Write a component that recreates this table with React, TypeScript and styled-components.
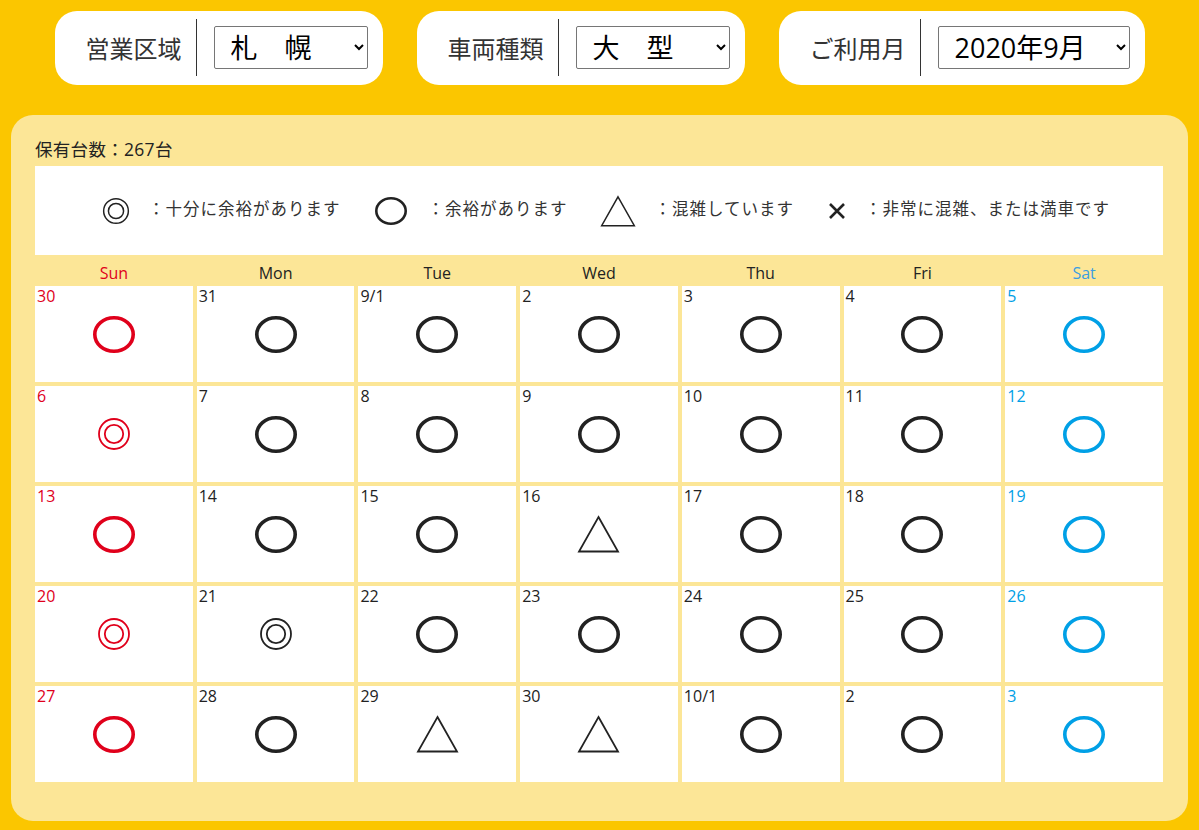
import React from "react";
import styled, { createGlobalStyle } from "styled-components";

const GlobalStyle = createGlobalStyle`
  body {
    margin: 0;
    background: #fbc600;
    font-family: "Open Sans", "Noto Sans CJK JP", sans-serif;
    color: #222;
  }
`;

const RED = "#e0001b";
const BLUE = "#00a0e6";
const DARK = "#222";

const Page = styled.div`
  width: 1199px;
  height: 830px;
  overflow: hidden;
`;

const Header = styled.div`
  display: flex;
  justify-content: center;
  gap: 34px;
  padding-top: 11px;
`;

const FilterBox = styled.div`
  display: flex;
  align-items: center;
  height: 74px;
  box-sizing: border-box;
  padding: 8px 15px 9px 31px;
  background: #fff;
  border-radius: 22px;
`;

const FilterLabel = styled.span`
  font-family: "Noto Sans CJK JP", sans-serif;
  font-size: 24px;
  color: #333;
  white-space: nowrap;
`;

const Divider = styled.div`
  align-self: stretch;
  width: 1px;
  background: #333;
  margin: 0 17px 0 14px;
`;

const Select = styled.select<{ $w: number }>`
  width: ${(p) => p.$w}px;
  height: 43px;
  font-family: "Open Sans", "Noto Sans CJK JP", sans-serif;
  font-size: 27px;
  color: #000;
  background: #fff;
  border: 1px solid #767676;
  border-radius: 2px;
  padding: 0 8px 0 12px;
`;

const Panel = styled.div`
  margin: 30px 11px 0;
  padding: 22px 25px 39px 24px;
  background: #fce697;
  border-radius: 22px;
`;

const Holdings = styled.div`
  font-family: "Open Sans", "Noto Sans CJK JP", sans-serif;
  font-size: 17.5px;
  line-height: 24px;
  letter-spacing: 0.3px;
  margin-bottom: 5px;
`;

const Legend = styled.div`
  display: flex;
  justify-content: center;
  align-items: center;
  gap: 33px;
  height: 89px;
  padding-left: 14px;
  background: #fff;
`;

const LegendItem = styled.div`
  display: flex;
  align-items: center;
  gap: 18px;
`;

const LegendText = styled.span`
  font-family: "Noto Sans CJK JP", sans-serif;
  font-size: 16.5px;
  letter-spacing: 1px;
  color: #333;
  margin-top: -6px;
`;

const Grid = styled.div`
  display: grid;
  grid-template-columns: repeat(7, 1fr);
  column-gap: 4px;
  row-gap: 4px;
`;

const DayName = styled.div<{ $c: string }>`
  height: 27px;
  display: flex;
  align-items: flex-end;
  justify-content: center;
  font-size: 16px;
  line-height: 18px;
  color: ${(p) => p.$c};
`;

const Cell = styled.div`
  height: 96px;
  background: #fff;
  display: grid;
  grid-template-areas: "stack";
`;

const DayNum = styled.span<{ $c: string }>`
  grid-area: stack;
  align-self: start;
  justify-self: start;
  padding: 0 0 0 2px;
  font-size: 16px;
  line-height: 20px;
  color: ${(p) => p.$c};
`;

const Mark = styled.div`
  grid-area: stack;
  align-self: center;
  justify-self: center;
  display: flex;
`;

type Kind = "double" | "circle" | "tri" | "cross";

const Symbol = ({ kind, color, big }: { kind: Kind; color: string; big?: boolean }) => {
  if (kind === "circle") {
    const w = big ? 46 : 36;
    const h = big ? 41 : 32;
    const sw = big ? 3.6 : 2.6;
    return (
      <svg width={w} height={h} viewBox={`0 0 ${w} ${h}`}>
        <ellipse cx={w / 2} cy={h / 2} rx={w / 2 - 2 - sw / 2} ry={h / 2 - 2 - sw / 2} fill="none" stroke={color} strokeWidth={sw} />
      </svg>
    );
  }
  if (kind === "double") {
    const s = big ? 34 : 28;
    return (
      <svg width={s} height={s} viewBox="0 0 34 34">
        <circle cx="17" cy="17" r="15" fill="none" stroke={color} strokeWidth="1.8" />
        <circle cx="17" cy="17" r="9.2" fill="none" stroke={color} strokeWidth="1.8" />
      </svg>
    );
  }
  if (kind === "tri") {
    const w = big ? 43 : 36;
    const h = big ? 38 : 32;
    return (
      <svg width={w} height={h} viewBox="0 0 43 38">
        <polygon points="21.5,2 41,36.5 2,36.5" fill="none" stroke={color} strokeWidth="1.8" strokeLinejoin="miter" />
      </svg>
    );
  }
  return (
    <svg width="20" height="20" viewBox="0 0 20 20">
      <path d="M3 3 L17 17 M17 3 L3 17" stroke={color} strokeWidth="2.6" />
    </svg>
  );
};

type Day = { label: string; mark: Kind };

const rows: [string, Kind][][] = [
  [["30", "circle"], ["31", "circle"], ["9/1", "circle"], ["2", "circle"], ["3", "circle"], ["4", "circle"], ["5", "circle"]],
  [["6", "double"], ["7", "circle"], ["8", "circle"], ["9", "circle"], ["10", "circle"], ["11", "circle"], ["12", "circle"]],
  [["13", "circle"], ["14", "circle"], ["15", "circle"], ["16", "tri"], ["17", "circle"], ["18", "circle"], ["19", "circle"]],
  [["20", "double"], ["21", "double"], ["22", "circle"], ["23", "circle"], ["24", "circle"], ["25", "circle"], ["26", "circle"]],
  [["27", "circle"], ["28", "circle"], ["29", "tri"], ["30", "tri"], ["10/1", "circle"], ["2", "circle"], ["3", "circle"]],
];

const days: Day[] = rows.flat().map(([label, mark]) => ({ label, mark }));

const weekNames = ["Sun", "Mon", "Tue", "Wed", "Thu", "Fri", "Sat"];

const colorFor = (i: number) => (i % 7 === 0 ? RED : i % 7 === 6 ? BLUE : DARK);

const legend: { kind: Kind; text: string }[] = [
  { kind: "double", text: "：十分に余裕があります" },
  { kind: "circle", text: "：余裕があります" },
  { kind: "tri", text: "：混雑しています" },
  { kind: "cross", text: "：非常に混雑、または満車です" },
];

const App: React.FC = () => {
  return (
    <Page>
      <GlobalStyle />
      <Header>
        <FilterBox>
          <FilterLabel>営業区域</FilterLabel>
          <Divider />
          <Select $w={154} defaultValue="sapporo">
            <option value="sapporo">札　幌</option>
          </Select>
        </FilterBox>
        <FilterBox>
          <FilterLabel>車両種類</FilterLabel>
          <Divider />
          <Select $w={154} defaultValue="large">
            <option value="large">大　型</option>
          </Select>
        </FilterBox>
        <FilterBox>
          <FilterLabel>ご利用月</FilterLabel>
          <Divider />
          <Select $w={192} defaultValue="2020-09">
            <option value="2020-09">2020年9月</option>
          </Select>
        </FilterBox>
      </Header>
      <Panel>
        <Holdings>保有台数：267台</Holdings>
        <Legend>
          {legend.map((l) => (
            <LegendItem key={l.text}>
              <Symbol kind={l.kind} color={DARK} />
              <LegendText>{l.text}</LegendText>
            </LegendItem>
          ))}
        </Legend>
        <Grid>
          {weekNames.map((n, i) => (
            <DayName key={n} $c={i === 6 ? "#3a9ee0" : i === 0 ? RED : DARK}>
              {n}
            </DayName>
          ))}
          {days.map((d, i) => (
            <Cell key={i}>
              <DayNum $c={colorFor(i)}>{d.label}</DayNum>
              <Mark>
                <Symbol kind={d.mark} color={colorFor(i)} big />
              </Mark>
            </Cell>
          ))}
        </Grid>
      </Panel>
    </Page>
  );
};

export default App;
